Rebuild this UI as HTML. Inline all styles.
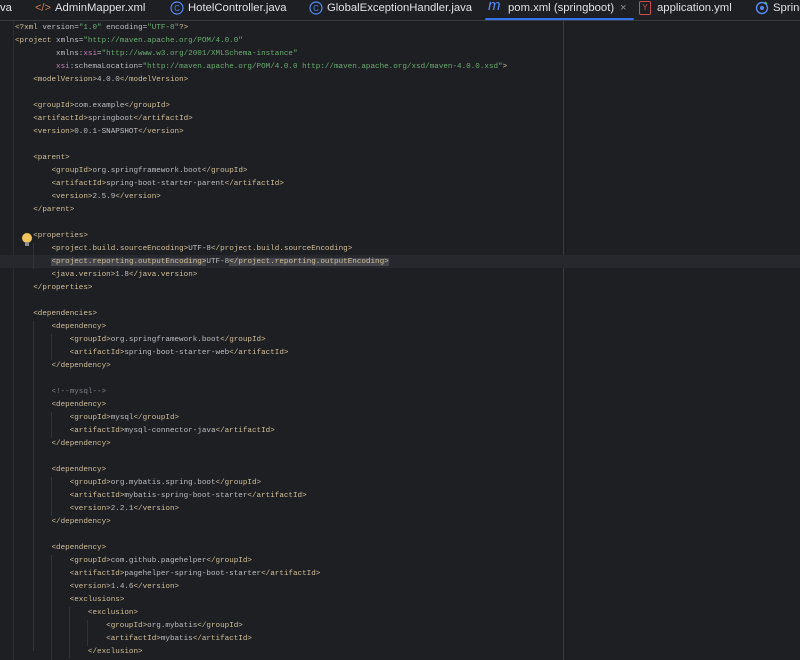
<!DOCTYPE html>
<html><head><meta charset="utf-8">
<style>
html,body{margin:0;padding:0;background:#1e1f22;width:800px;height:660px;overflow:hidden;position:relative;font-family:"Liberation Sans",sans-serif}
.tabs{position:absolute;left:0;top:0;width:800px;height:20px;background:#1e1f22;border-bottom:1px solid #393b40}
.tab{position:absolute;top:0;height:20px;line-height:14px;font-size:11.3px;color:#dfe1e5;white-space:nowrap}
.ico{position:absolute;top:1px}
.ul{position:absolute;left:485px;top:18px;width:149px;height:2px;background:#3574f0;border-radius:1px}
.gut{position:absolute;left:13px;top:21px;width:1px;height:639px;background:#2b2d30}
.margin{position:absolute;left:563px;top:21px;width:1px;height:639px;background:#393b40}
pre{position:absolute;left:15px;top:21.5px;margin:0;font-family:"Liberation Mono",monospace;font-size:7.6px;line-height:13px;color:#bcbec4}
.t{color:#d0bf9c}.v{color:#6aab73}.x{color:#c77dbb}.c{color:#7a7e85}
.hl{position:absolute;left:0;top:255px;width:800px;height:13px;background:#26282e}
.m{background:#43454a}
.g{position:absolute;width:1px;background:#313338}
</style></head><body>
<div class="tabs">
 <div class="tab" style="left:0;top:1px">va</div>
 <div class="tab" style="left:35px;top:1px;color:#c77d55;font-size:11px">&lt;/&gt;</div>
 <div class="tab" style="left:55px;top:1px">AdminMapper.xml</div>
 <svg class="ico" style="left:170px" width="14" height="14"><circle cx="7" cy="7" r="6" fill="none" stroke="#548af7" stroke-width="1.2"/><text x="7" y="10" font-size="8" fill="#548af7" text-anchor="middle" font-family="Liberation Sans">C</text></svg>
 <div class="tab" style="left:188px;top:1px">HotelController.java</div>
 <svg class="ico" style="left:309px" width="14" height="14"><circle cx="7" cy="7" r="6" fill="none" stroke="#548af7" stroke-width="1.2"/><text x="7" y="10" font-size="8" fill="#548af7" text-anchor="middle" font-family="Liberation Sans">C</text></svg>
 <div class="tab" style="left:327px;top:1px">GlobalExceptionHandler.java</div>
 <div class="tab" style="left:488px;top:-1px;color:#548af7;font-style:italic;font-size:15px">m</div>
 <div class="tab" style="left:508px;top:1px">pom.xml (springboot)</div>
 <div class="tab" style="left:620px;top:1px;color:#8c8f94">×</div>
 <div class="ico" style="left:639px;top:1px;width:10px;height:12px;border:1px solid #c94f4f;border-radius:2px;color:#c94f4f;font-size:8px;line-height:12px;text-align:center">Y</div>
 <div class="tab" style="left:657px;top:1px">application.yml</div>
 <svg class="ico" style="left:755px" width="14" height="14"><circle cx="7" cy="7" r="5.5" fill="none" stroke="#548af7" stroke-width="1.4"/><circle cx="7" cy="7" r="2" fill="#548af7"/><path d="M10 1 L12 3" stroke="#5fb85f" stroke-width="1.5"/></svg>
 <div class="tab" style="left:773px;top:1px">Spring</div>
 <div class="ul"></div>
</div>
<div class="gut"></div>
<div class="margin"></div>
<div class="hl"></div>
<div class="g" style="left:33px;top:243px;height:26px"></div>
<div class="g" style="left:33px;top:321px;height:330px"></div>
<div class="g" style="left:51px;top:334px;height:26px"></div>
<div class="g" style="left:51px;top:412px;height:26px"></div>
<div class="g" style="left:51px;top:477px;height:39px"></div>
<div class="g" style="left:51px;top:555px;height:105px"></div>
<div class="g" style="left:69px;top:607px;height:52px"></div>
<div class="g" style="left:87px;top:620px;height:26px"></div>
<div style="position:absolute;left:22px;top:233px;width:10px;height:10px;border-radius:50%;background:#f2c55c"></div>
<div style="position:absolute;left:25px;top:242px;width:4px;height:4px;background:#8c8f94"></div>
<pre><span class="t">&lt;?xml </span>version=<span class="v">"1.0"</span> encoding=<span class="v">"UTF-8"</span><span class="t">?&gt;</span>
<span class="t">&lt;project </span>xmlns=<span class="v">"http://maven.apache.org/POM/4.0.0"</span>
         xmlns:<span class="x">xsi</span>=<span class="v">"http://www.w3.org/2001/XMLSchema-instance"</span>
         <span class="x">xsi</span>:schemaLocation=<span class="v">"http://maven.apache.org/POM/4.0.0 http://maven.apache.org/xsd/maven-4.0.0.xsd"</span><span class="t">&gt;</span>
    <span class="t">&lt;modelVersion&gt;</span>4.0.0<span class="t">&lt;/modelVersion&gt;</span>

    <span class="t">&lt;groupId&gt;</span>com.example<span class="t">&lt;/groupId&gt;</span>
    <span class="t">&lt;artifactId&gt;</span>springboot<span class="t">&lt;/artifactId&gt;</span>
    <span class="t">&lt;version&gt;</span>0.0.1-SNAPSHOT<span class="t">&lt;/version&gt;</span>

    <span class="t">&lt;parent&gt;</span>
        <span class="t">&lt;groupId&gt;</span>org.springframework.boot<span class="t">&lt;/groupId&gt;</span>
        <span class="t">&lt;artifactId&gt;</span>spring-boot-starter-parent<span class="t">&lt;/artifactId&gt;</span>
        <span class="t">&lt;version&gt;</span>2.5.9<span class="t">&lt;/version&gt;</span>
    <span class="t">&lt;/parent&gt;</span>

    <span class="t">&lt;properties&gt;</span>
        <span class="t">&lt;project.build.sourceEncoding&gt;</span>UTF-8<span class="t">&lt;/project.build.sourceEncoding&gt;</span>
        <span class="t m">&lt;project.reporting.outputEncoding&gt;</span>UTF-8<span class="t m">&lt;/project.reporting.outputEncoding&gt;</span>
        <span class="t">&lt;java.version&gt;</span>1.8<span class="t">&lt;/java.version&gt;</span>
    <span class="t">&lt;/properties&gt;</span>

    <span class="t">&lt;dependencies&gt;</span>
        <span class="t">&lt;dependency&gt;</span>
            <span class="t">&lt;groupId&gt;</span>org.springframework.boot<span class="t">&lt;/groupId&gt;</span>
            <span class="t">&lt;artifactId&gt;</span>spring-boot-starter-web<span class="t">&lt;/artifactId&gt;</span>
        <span class="t">&lt;/dependency&gt;</span>

        <span class="c">&lt;!--mysql--&gt;</span>
        <span class="t">&lt;dependency&gt;</span>
            <span class="t">&lt;groupId&gt;</span>mysql<span class="t">&lt;/groupId&gt;</span>
            <span class="t">&lt;artifactId&gt;</span>mysql-connector-java<span class="t">&lt;/artifactId&gt;</span>
        <span class="t">&lt;/dependency&gt;</span>

        <span class="t">&lt;dependency&gt;</span>
            <span class="t">&lt;groupId&gt;</span>org.mybatis.spring.boot<span class="t">&lt;/groupId&gt;</span>
            <span class="t">&lt;artifactId&gt;</span>mybatis-spring-boot-starter<span class="t">&lt;/artifactId&gt;</span>
            <span class="t">&lt;version&gt;</span>2.2.1<span class="t">&lt;/version&gt;</span>
        <span class="t">&lt;/dependency&gt;</span>

        <span class="t">&lt;dependency&gt;</span>
            <span class="t">&lt;groupId&gt;</span>com.github.pagehelper<span class="t">&lt;/groupId&gt;</span>
            <span class="t">&lt;artifactId&gt;</span>pagehelper-spring-boot-starter<span class="t">&lt;/artifactId&gt;</span>
            <span class="t">&lt;version&gt;</span>1.4.6<span class="t">&lt;/version&gt;</span>
            <span class="t">&lt;exclusions&gt;</span>
                <span class="t">&lt;exclusion&gt;</span>
                    <span class="t">&lt;groupId&gt;</span>org.mybatis<span class="t">&lt;/groupId&gt;</span>
                    <span class="t">&lt;artifactId&gt;</span>mybatis<span class="t">&lt;/artifactId&gt;</span>
                <span class="t">&lt;/exclusion&gt;</span>
            <span class="t">&lt;/exclusions&gt;</span>
        <span class="t">&lt;/dependency&gt;</span>
</pre>
</body></html>
